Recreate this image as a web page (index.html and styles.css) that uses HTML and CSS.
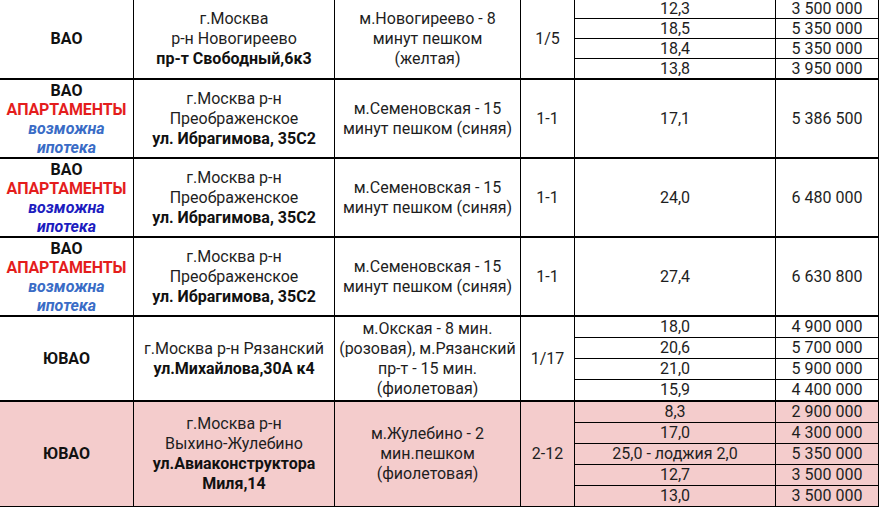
FILE: index.html
```html
<!DOCTYPE html>
<html lang="ru">
<head>
<meta charset="utf-8">
<link rel="stylesheet" href="styles.css">
</head>
<body>
<div class="sheet">
<table class="grid">
<colgroup>
<col class="c1"><col class="c2"><col class="c3"><col class="c4"><col class="c5"><col class="c6">
</colgroup>
<tbody class="grp g1">
<tr class="s"><td rowspan="4" class="b">ВАО</td><td rowspan="4">г.Москва<br>р-н Новогиреево<br><b>пр-т Свободный,6к3</b></td><td rowspan="4">м.Новогиреево - 8<br>минут пешком<br>(желтая)</td><td rowspan="4">1/5</td><td>12,3</td><td>3 500 000</td></tr>
<tr class="s"><td>18,5</td><td>5 350 000</td></tr>
<tr class="s"><td>18,4</td><td>5 350 000</td></tr>
<tr class="s"><td>13,8</td><td>3 950 000</td></tr>
</tbody>
<tbody class="grp">
<tr class="big"><td class="tag"><b>ВАО</b><br><span class="apt">АПАРТАМЕНТЫ</span><br><span class="mort">возможна<br>ипотека</span></td><td>г.Москва р-н<br>Преображенское<br><b>ул. Ибрагимова, 35С2</b></td><td>м.Семеновская - 15<br>минут пешком (синяя)</td><td>1-1</td><td>17,1</td><td>5 386 500</td></tr>
</tbody>
<tbody class="grp">
<tr class="big"><td class="tag"><b>ВАО</b><br><span class="apt">АПАРТАМЕНТЫ</span><br><span class="mort dark">возможна<br>ипотека</span></td><td>г.Москва р-н<br>Преображенское<br><b>ул. Ибрагимова, 35С2</b></td><td>м.Семеновская - 15<br>минут пешком (синяя)</td><td>1-1</td><td>24,0</td><td>6 480 000</td></tr>
</tbody>
<tbody class="grp">
<tr class="big"><td class="tag"><b>ВАО</b><br><span class="apt">АПАРТАМЕНТЫ</span><br><span class="mort">возможна<br>ипотека</span></td><td>г.Москва р-н<br>Преображенское<br><b>ул. Ибрагимова, 35С2</b></td><td>м.Семеновская - 15<br>минут пешком (синяя)</td><td>1-1</td><td>27,4</td><td>6 630 800</td></tr>
</tbody>
<tbody class="grp">
<tr class="m"><td rowspan="4" class="b">ЮВАО</td><td rowspan="4">г.Москва р-н Рязанский<br><b>ул.Михайлова,30А к4</b></td><td rowspan="4">м.Окская - 8 мин.<br>(розовая), м.Рязанский<br>пр-т - 15 мин.<br>(фиолетовая)</td><td rowspan="4">1/17</td><td>18,0</td><td>4 900 000</td></tr>
<tr class="m"><td>20,6</td><td>5 700 000</td></tr>
<tr class="m"><td>21,0</td><td>5 900 000</td></tr>
<tr class="m"><td>15,9</td><td>4 400 000</td></tr>
</tbody>
<tbody class="grp pink">
<tr class="m"><td rowspan="5" class="b">ЮВАО</td><td rowspan="5">г.Москва р-н<br>Выхино-Жулебино<br><b>ул.Авиаконструктора<br>Миля,14</b></td><td rowspan="5">м.Жулебино - 2<br>мин.пешком<br>(фиолетовая)</td><td rowspan="5">2-12</td><td>8,3</td><td>2 900 000</td></tr>
<tr class="m"><td>17,0</td><td>4 300 000</td></tr>
<tr class="m"><td>25,0 - лоджия 2,0</td><td>5 350 000</td></tr>
<tr class="m"><td>12,7</td><td>3 500 000</td></tr>
<tr class="m"><td>13,0</td><td>3 500 000</td></tr>
</tbody>
</table>
</div>
</body>
</html>
```
FILE: styles.css
```css
html, body {
  margin: 0;
  padding: 0;
  background: #fff;
}
.sheet {
  width: 879px;
  height: 507px;
  overflow: hidden;
}
.grid {
  border-collapse: collapse;
  table-layout: fixed;
  width: 879px;
  margin-top: -2px;
  margin-left: -1px;
  font-family: Roboto, "Noto Sans", sans-serif;
  font-size: 16px;
  line-height: 20px;
  color: #1e1e1e;
}
.c1 { width: 134px; }
.c2 { width: 201px; }
.c3 { width: 186px; }
.c4 { width: 54px; }
.c5 { width: 201px; }
.c6 { width: 103px; }
.grid td {
  border: 1px solid #000;
  padding: 0 3px;
  text-align: center;
  vertical-align: middle;
  overflow: hidden;
  white-space: nowrap;
}
.grp {
  border-bottom: 2px solid #000;
}
.grp td:first-child[rowspan],
.grp .big td {
  border-bottom: 2px solid #000;
}
.grp tr:last-child td {
  border-bottom: 2px solid #000;
}
.s td { height: 19px; line-height: 19px; }
.s td[rowspan] { line-height: 20px; }
.big td { height: 77px; line-height: 20px; }
.big td.tag { line-height: 19px; }
.m td { height: 20px; line-height: 20px; }
.b, b { font-weight: 700; color: #111; }
.apt { color: #e41d1d; font-weight: 700; letter-spacing: -0.1px; }
.mort { color: #3a6cc6; font-weight: 700; font-style: italic; }
.mort.dark { color: #1d1dbf; }
.pink td { background: #f4cccc; }
```
